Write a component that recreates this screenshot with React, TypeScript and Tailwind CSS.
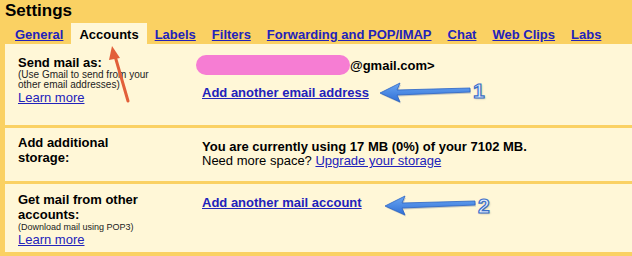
const tabs = ["General", "Accounts", "Labels", "Filters", "Forwarding and POP/IMAP", "Chat", "Web Clips", "Labs"];

function BlueArrow({ className }: { className: string }) {
  return (
    <svg className={className} width="96" height="24" viewBox="0 0 96 24">
      <defs>
        <linearGradient id="ab" x1="0" y1="0" x2="0" y2="1">
          <stop offset="0" stopColor="#6aa6f2" />
          <stop offset="1" stopColor="#2f6fd6" />
        </linearGradient>
      </defs>
      <path d="M2 13 L22 3 L19 10 L92 8 L92 12 L19 15 L22 22 Z" fill="#1a3f80" opacity="0.25" transform="translate(1 1.5)" />
      <path d="M2 13 L22 3 L19 10 L92 8 L92 12 L19 15 L22 22 Z" fill="url(#ab)" stroke="#2b63c4" strokeWidth="0.8" />
    </svg>
  );
}

function Num({ n, className }: { n: string; className: string }) {
  return (
    <span
      className={`absolute text-[21px] font-bold leading-none text-[#e3eefc] [-webkit-text-stroke:1.2px_#3a6ec8] [text-shadow:1px_1px_2px_rgba(0,0,0,0.25)] ${className}`}
    >
      {n}
    </span>
  );
}

export default function App() {
  return (
    <div className="relative w-[632px] h-[256px] overflow-hidden bg-[#fad163] font-['Liberation_Sans',Arial,sans-serif] text-black">
      <div className="pl-[5px] h-[23px] text-[17px] font-bold leading-[22px]">Settings</div>
      <div className="flex items-end h-[21px] pl-[7px]">
        {tabs.map((t) =>
          t === "Accounts" ? (
            <span key={t} className="px-2 h-[21px] pt-[4px] bg-[#fff7d7] text-[13px] font-bold leading-[15px]">
              {t}
            </span>
          ) : (
            <a key={t} href="#" className="px-2 h-[21px] pt-[4px] text-[13px] font-bold leading-[15px] text-[#2222bb] underline">
              {t}
            </a>
          )
        )}
      </div>
      <div className="ml-[5px] bg-[#fff7d7]">
        <div className="flex h-[84px] border-b-[3px] border-[#fad163]">
          <div className="w-[197px] pl-[13px] pt-[11px]">
            <div className="text-[13px] font-bold leading-[15px]">Send mail as:</div>
            <div className="text-[10px] leading-[10px] text-[#222]">
              (Use Gmail to send from your
              <br />
              other email addresses)
            </div>
            <a href="#" className="block text-[13px] leading-[15px] text-[#2222bb] underline">Learn more</a>
          </div>
          <div className="pt-[11px]">
            <div className="flex items-center h-[20px] -ml-[6px]">
              <span className="w-[154px] h-[20px] rounded-full bg-[#f67dd3]" />
              <span className="text-[13px] font-bold leading-[15px]">@gmail.com&gt;</span>
            </div>
            <a href="#" className="block mt-[10px] text-[13px] font-bold leading-[15px] text-[#2222bb] underline">Add another email address</a>
          </div>
        </div>
        <div className="flex h-[56px] border-b-[3px] border-[#fad163]">
          <div className="w-[197px] pl-[13px] pt-[7px] text-[13px] font-bold leading-[15px]">
            Add additional
            <br />
            storage:
          </div>
          <div className="pt-[12px] text-[13px] leading-[14px]">
            <div className="font-bold">You are currently using 17 MB (0%) of your 7102 MB.</div>
            <div>
              Need more space? <a href="#" className="text-[#2222bb] underline">Upgrade your storage</a>
            </div>
          </div>
        </div>
        <div className="flex h-[71px] border-b-[3px] border-[#fad163]">
          <div className="w-[197px] pl-[13px] pt-[8px]">
            <div className="text-[13px] font-bold leading-[15px]">
              Get mail from other
              <br />
              accounts:
            </div>
            <div className="text-[9px] leading-[10px] text-[#222]">(Download mail using POP3)</div>
            <a href="#" className="block text-[13px] leading-[15px] text-[#2222bb] underline">Learn more</a>
          </div>
          <div className="pt-[11px]">
            <a href="#" className="block text-[13px] font-bold leading-[15px] text-[#2222bb] underline">Add another mail account</a>
          </div>
        </div>
      </div>

      <svg className="absolute left-[104px] top-[44px]" width="34" height="60" viewBox="0 0 34 60">
        <path d="M24 57 L11 12" stroke="#e2603a" strokeWidth="3" strokeLinecap="round" />
        <path d="M8 2 L16 14 L5 16 Z" fill="#e2603a" />
      </svg>
      <BlueArrow className="absolute left-[378px] top-[80px]" />
      <Num n="1" className="left-[473px] top-[80px]" />
      <BlueArrow className="absolute left-[383px] top-[193px]" />
      <Num n="2" className="left-[478px] top-[195px]" />
    </div>
  );
}
